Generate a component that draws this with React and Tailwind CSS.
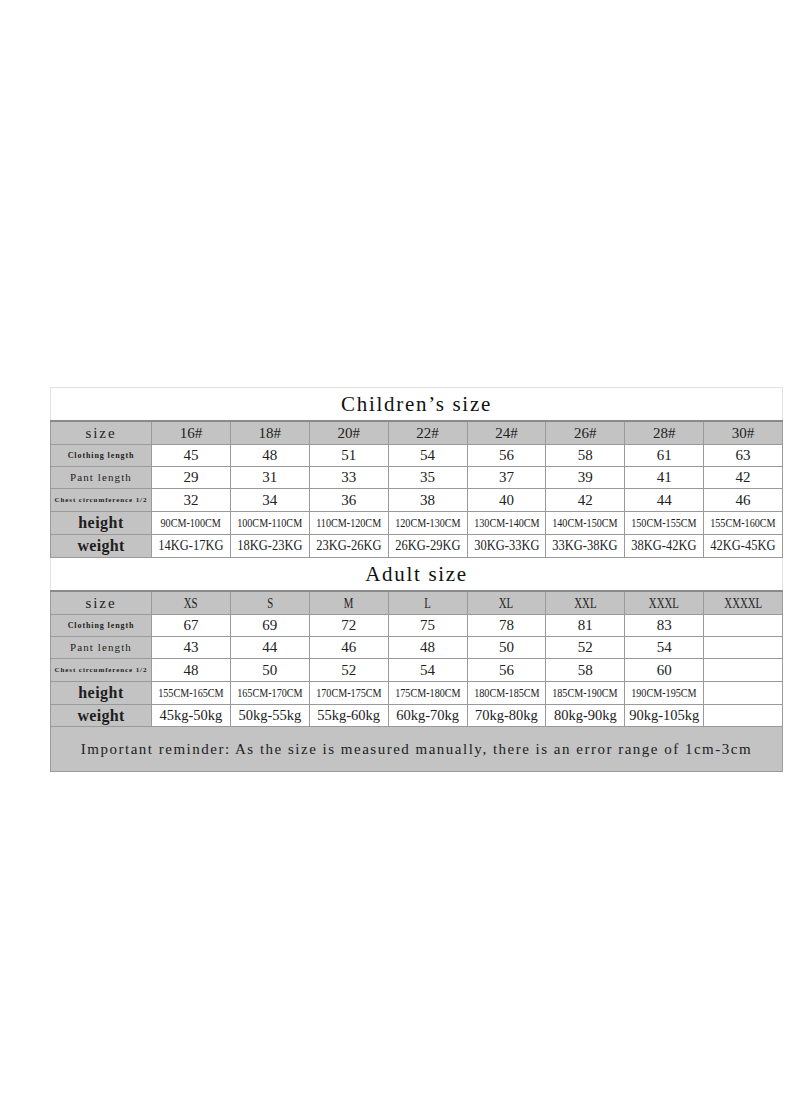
const SERIF = { fontFamily: "'Liberation Serif', 'DejaVu Serif', serif" };

const children = {
  sizes: ['16#', '18#', '20#', '22#', '24#', '26#', '28#', '30#'],
  clothing: ['45', '48', '51', '54', '56', '58', '61', '63'],
  pant: ['29', '31', '33', '35', '37', '39', '41', '42'],
  chest: ['32', '34', '36', '38', '40', '42', '44', '46'],
  height: ['90CM-100CM', '100CM-110CM', '110CM-120CM', '120CM-130CM', '130CM-140CM', '140CM-150CM', '150CM-155CM', '155CM-160CM'],
  weight: ['14KG-17KG', '18KG-23KG', '23KG-26KG', '26KG-29KG', '30KG-33KG', '33KG-38KG', '38KG-42KG', '42KG-45KG'],
};

const adult = {
  sizes: ['XS', 'S', 'M', 'L', 'XL', 'XXL', 'XXXL', 'XXXXL'],
  clothing: ['67', '69', '72', '75', '78', '81', '83', ''],
  pant: ['43', '44', '46', '48', '50', '52', '54', ''],
  chest: ['48', '50', '52', '54', '56', '58', '60', ''],
  height: ['155CM-165CM', '165CM-170CM', '170CM-175CM', '175CM-180CM', '180CM-185CM', '185CM-190CM', '190CM-195CM', ''],
  weight: ['45kg-50kg', '50kg-55kg', '55kg-60kg', '60kg-70kg', '70kg-80kg', '80kg-90kg', '90kg-105kg', ''],
};

function Row({ label, labelClass, cells, cellClass, h, header }) {
  return (
    <div className={`flex ${h} border-b border-[#9a9a9a]`} style={SERIF}>
      <div className={`w-[102px] shrink-0 flex items-center justify-center bg-[#c3c3c3] border-l border-r border-[#9a9a9a] text-[#1e1e1e] whitespace-nowrap ${labelClass}`}>
        {label}
      </div>
      {cells.map((c, i) => (
        <div
          key={i}
          className={`flex-1 min-w-0 flex items-center justify-center border-r border-[#9a9a9a] text-[#222] whitespace-nowrap ${header ? 'bg-[#c3c3c3]' : 'bg-white'}`}
        >
          <span className={`inline-block ${cellClass}`}>{c}</span>
        </div>
      ))}
    </div>
  );
}

function SizeTable({ title, data, titleH, headerClass, weightClass, weightH }) {
  return (
    <div>
      <div
        className={`${titleH} flex items-center justify-center border-l border-r border-[#e2e2e2] text-[21px] tracking-[1.7px] text-[#111] pt-[1px]`}
        style={SERIF}
      >
        {title}
      </div>
      <div className="border-t-2 border-[#8a8a8a]">
        <Row label="size" labelClass="text-[15px] tracking-[1.9px]" cells={data.sizes} cellClass={headerClass} h="h-[23px]" header />
        <Row label="Clothing length" labelClass="text-[8px] font-bold tracking-[0.9px]" cells={data.clothing} cellClass="text-[15px]" h="h-[22px]" />
        <Row label="Pant length" labelClass="text-[11px] tracking-[1.1px]" cells={data.pant} cellClass="text-[15px]" h="h-[22px]" />
        <Row label="Chest circumference 1/2" labelClass="text-[7px] font-bold tracking-[0.9px]" cells={data.chest} cellClass="text-[15px]" h="h-[23px]" />
        <Row label="height" labelClass="text-[16px] font-bold tracking-[0.5px]" cells={data.height} cellClass="text-[13px] scale-x-[0.78]" h="h-[23px]" />
        <Row label="weight" labelClass="text-[16px] font-bold tracking-[0.3px]" cells={data.weight} cellClass={weightClass} h={weightH} />
      </div>
    </div>
  );
}

export default function App() {
  return (
    <div className="w-[800px] h-[1096px] bg-white pt-[387px] pl-[50px]">
      <div className="w-[733px]">
        <SizeTable
          title="Children’s size"
          data={children}
          titleH="h-[33px] border-t border-t-[#e2e2e2]"
          headerClass="text-[15px]"
          weightClass="text-[14.5px] scale-x-[0.86]"
          weightH="h-[23px]"
        />
        <SizeTable
          title="Adult size"
          data={adult}
          titleH="h-[32px]"
          headerClass="text-[15px] scale-x-[0.72]"
          weightClass="text-[14.5px]"
          weightH="h-[22px]"
        />
        <div
          className="h-[45px] flex items-center justify-center bg-[#c3c3c3] border-l border-r border-b border-[#9a9a9a] text-[15px] tracking-[1.5px] text-[#222] whitespace-nowrap"
          style={SERIF}
        >
          Important reminder: As the size is measured manually, there is an error range of 1cm-3cm
        </div>
      </div>
    </div>
  );
}
